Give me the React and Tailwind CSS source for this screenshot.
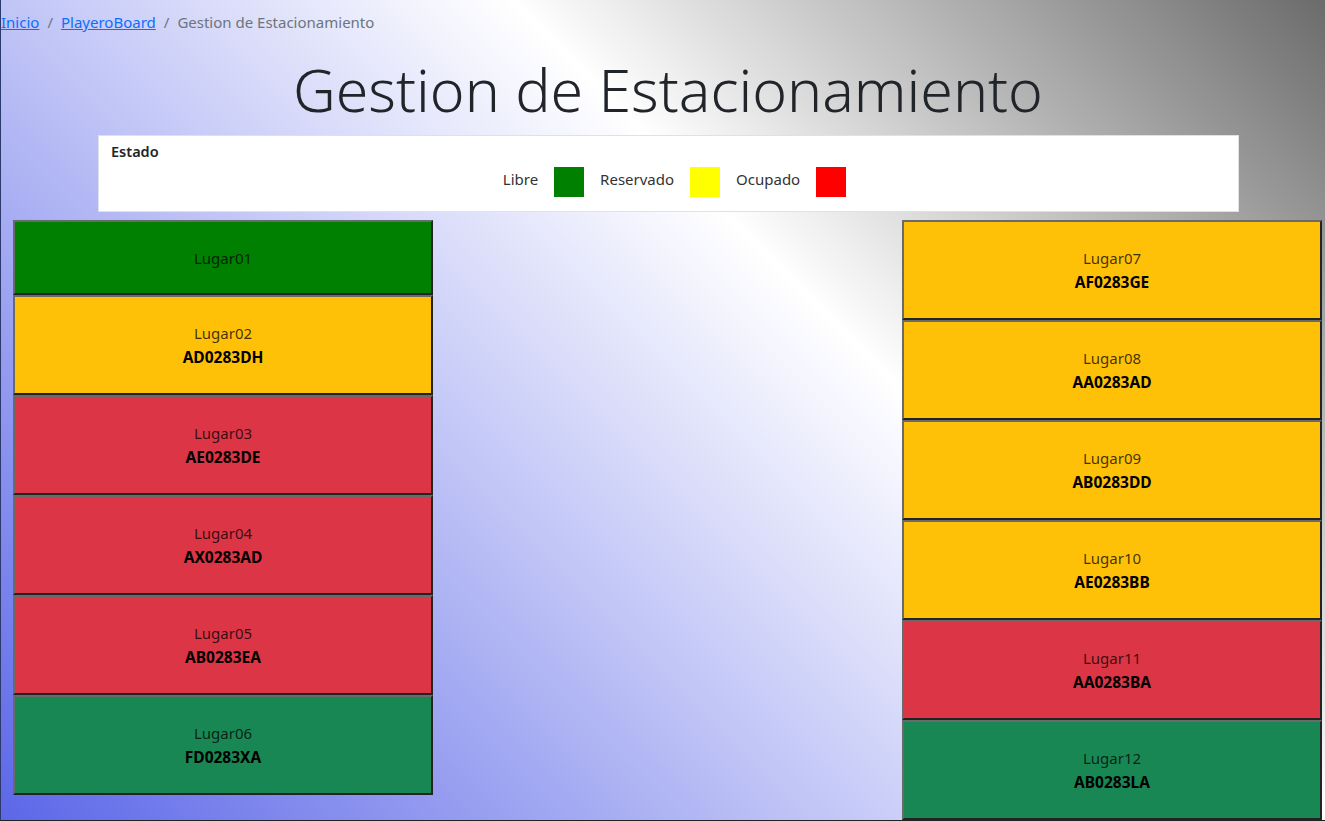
import React from "react";

const left = [
  { name: "Lugar01", plate: null, bg: "bg-[#008000]" },
  { name: "Lugar02", plate: "AD0283DH", bg: "bg-[#ffc107]" },
  { name: "Lugar03", plate: "AE0283DE", bg: "bg-[#dc3545]" },
  { name: "Lugar04", plate: "AX0283AD", bg: "bg-[#dc3545]" },
  { name: "Lugar05", plate: "AB0283EA", bg: "bg-[#dc3545]" },
  { name: "Lugar06", plate: "FD0283XA", bg: "bg-[#198754]" },
];
const right = [
  { name: "Lugar07", plate: "AF0283GE", bg: "bg-[#ffc107]" },
  { name: "Lugar08", plate: "AA0283AD", bg: "bg-[#ffc107]" },
  { name: "Lugar09", plate: "AB0283DD", bg: "bg-[#ffc107]" },
  { name: "Lugar10", plate: "AE0283BB", bg: "bg-[#ffc107]" },
  { name: "Lugar11", plate: "AA0283BA", bg: "bg-[#dc3545]" },
  { name: "Lugar12", plate: "AB0283LA", bg: "bg-[#198754]" },
];

function Spot({ s }) {
  return (
    <div
      className={`${s.bg} border-2 border-t-[#6a6a6a] border-l-[#6a6a6a] border-b-[#232323] border-r-[#232323] pt-[25px] pb-[23px] text-center text-[15px]`}
    >
      <div className="leading-[23px] text-black/75">{s.name}</div>
      {s.plate && <div className="text-[15.5px] leading-[25px] font-bold text-black">{s.plate}</div>}
    </div>
  );
}

export default function App() {
  return (
    <div
      className="h-[821px] w-[1325px] overflow-hidden border-l border-b border-l-[#2b3a6b] border-b-[#222] bg-[linear-gradient(45deg,#5c67e8_0%,#ffffff_62%,#6b6b6b_100%)] text-[#212529]"
      style={{ fontFamily: '"Noto Sans", "Open Sans", sans-serif' }}
    >
      <nav className="flex h-[44px] items-center text-[15px]">
        <a className="text-[#0d6efd] underline" href="#">Inicio</a>
        <span className="px-2 text-[#6c757d]">/</span>
        <a className="text-[#0d6efd] underline" href="#">PlayeroBoard</a>
        <span className="px-2 text-[#6c757d]">/</span>
        <span className="text-[#6c757d]">Gestion de Estacionamiento</span>
      </nav>
      <h1 className="flex h-[91px] items-center justify-center pl-[10px] text-[59px] font-light leading-none text-[#212529]">
        Gestion de Estacionamiento
      </h1>
      <div className="ml-[97px] h-[77px] w-[1141px] border border-[#dee2e6] bg-white px-3 pt-[5px]">
        <div className="text-[14.5px] font-semibold leading-[20px] text-[#212529]">Estado</div>
        <div className="mt-[6px] flex items-center justify-center gap-4 pl-[12px] text-[15px] text-[#333]">
          <span className="-translate-y-[3px]">Libre</span>
          <span className="h-[30px] w-[30px] bg-[#008000]" />
          <span className="-translate-y-[3px]">Reservado</span>
          <span className="h-[30px] w-[30px] bg-[#ffff00]" />
          <span className="-translate-y-[3px]">Ocupado</span>
          <span className="h-[30px] w-[30px] bg-[#ff0000]" />
        </div>
      </div>
      <div className="mt-[8px] flex justify-between pl-[12px] pr-[3px]">
        <div className="flex w-[420px] flex-col">
          {left.map((s) => (
            <Spot key={s.name} s={s} />
          ))}
        </div>
        <div className="flex w-[420px] flex-col">
          {right.map((s) => (
            <Spot key={s.name} s={s} />
          ))}
        </div>
      </div>
    </div>
  );
}
